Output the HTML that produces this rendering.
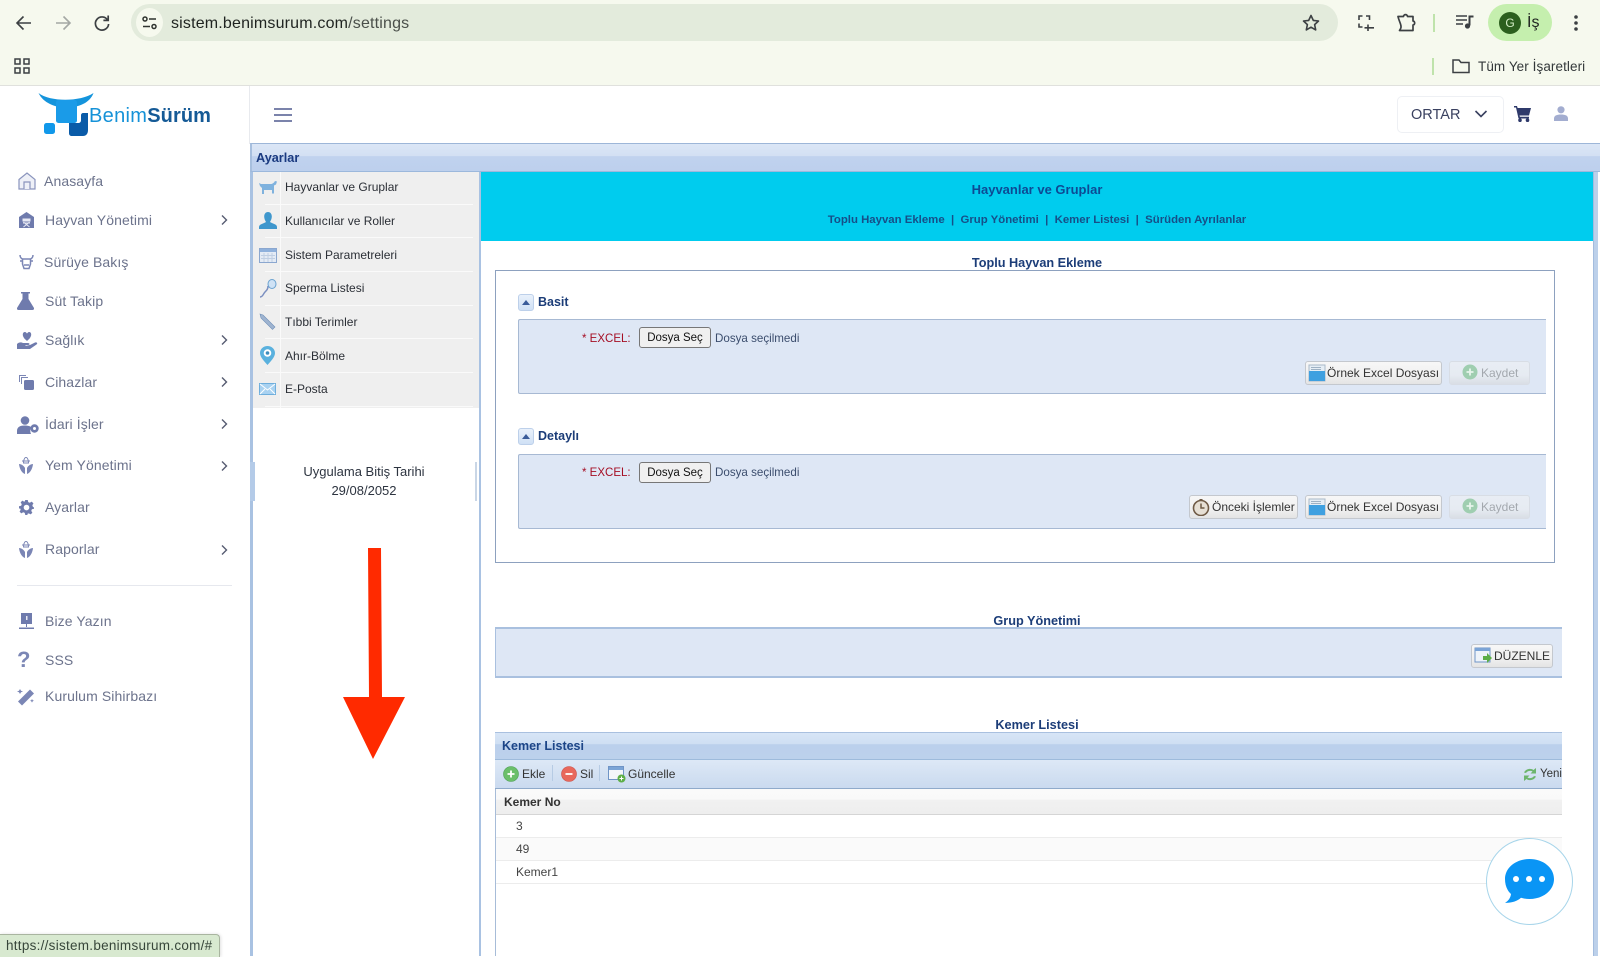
<!DOCTYPE html>
<html lang="tr"><head><meta charset="utf-8"><title>BenimSürüm</title>
<style>
*{box-sizing:border-box}
html,body{margin:0;padding:0;width:1600px;height:956px;overflow:hidden;background:#fff;font-family:"Liberation Sans",sans-serif}
.a{position:absolute}
.t{position:absolute;line-height:20px;height:20px;white-space:nowrap}
.m{font-size:14px;color:#6c738c;letter-spacing:.1px}
.l{font-size:12px;color:#2b2f36;left:285px}
.h{font-size:12.700px;font-weight:bold;color:#1c3d78;text-align:center}
.sep{position:absolute;left:265px;width:208px;height:1px;background:#fafafa}
.btn{position:absolute;height:24px;border:1px solid #c4c8ce;border-radius:3px;background:linear-gradient(#f7f7f7 0,#f0f0f0 60%,#e4e4e4 100%);font-size:12px;color:#333;line-height:22px;white-space:nowrap}
.btn svg{position:absolute;left:2px;top:2px}
.off{color:#a3a8ae;border-color:#d8dde5;background:linear-gradient(#e8edf4 0,#e6ebf2 60%,#d9dee5 100%)}
.file{position:absolute;left:639px;width:72px;height:21px;border:1px solid #777;border-radius:3px;background:#f0f0f0;font-size:11.500px;line-height:20px;text-align:center;color:#111}
svg{display:block}
.tog{position:absolute;left:518px;width:16px;height:17px;border:1px solid #bdd0ea;border-radius:3px;background:linear-gradient(#e9f1fb,#cfe0f5)}
.tog:after{content:"";position:absolute;left:3px;top:5px;border-left:4px solid transparent;border-right:4px solid transparent;border-bottom:5px solid #3a5c9a}
.pan{position:absolute;left:518px;width:1028px;background:#dee7f5;border:1px solid #a7b9d3;border-right:0;border-radius:2px 0 0 2px}
</style></head><body>

<!-- browser chrome -->
<div class="a" style="left:0;top:0;width:1600px;height:86px;background:#f6f9ee;border-bottom:1px solid #e0e1dd"></div>
<svg class="a" style="left:13px;top:12px" width="22" height="22" viewBox="0 0 22 22" fill="none" stroke="#3c4043" stroke-width="1.6"><path d="M18 11H4.500M10.500 4.500 4 11l6.500 6.500"/></svg>
<svg class="a" style="left:52px;top:12px" width="22" height="22" viewBox="0 0 22 22" fill="none" stroke="#a4a8a4" stroke-width="1.6"><path d="M4 11h13.500M11.500 4.500 18 11l-6.500 6.500"/></svg>
<svg class="a" style="left:91px;top:12px" width="22" height="22" viewBox="0 0 22 22" fill="none" stroke="#3c4043" stroke-width="1.7"><path d="M16.600 8A6.600 6.600 0 1 0 17.600 12"/><path d="M17.200 3.500V8.400H12.400"/></svg>
<div class="a" style="left:131px;top:4px;width:1207px;height:37px;background:#e3ebdc;border-radius:19px"></div>
<div class="a" style="left:136px;top:8px;width:27px;height:29px;background:#f6f9ee;border-radius:50%"></div>
<svg class="a" style="left:141px;top:15px" width="17" height="16" viewBox="0 0 17 16" fill="none" stroke="#2f332f" stroke-width="1.5"><circle cx="4" cy="4" r="2"/><path d="M8 4h7M2 11.500h7"/><circle cx="13" cy="11.500" r="2"/></svg>
<div class="t" style="left:171px;top:14px;font-size:16px;color:#1f2320;letter-spacing:.18px">sistem.benimsurum.com<span style="color:#4a4f4a">/settings</span></div>
<svg class="a" style="left:1301px;top:13px" width="20" height="20" viewBox="0 0 20 20" fill="none" stroke="#3c4043" stroke-width="1.6" stroke-linejoin="round"><path d="M10 2.500l2.300 4.900 5.200.6-3.900 3.600 1.100 5.300L10 14.200 5.300 16.900l1.100-5.300L2.500 8l5.200-.6z"/></svg>
<svg class="a" style="left:1356px;top:13px" width="20" height="20" viewBox="0 0 20 20" fill="none" stroke="#3c4043" stroke-width="1.6"><path d="M3 7V3h3.500M10 3h3.500v4M3 10.500V14h3.500M12 18v-6.500M8.500 14.800H18"/></svg>
<svg class="a" style="left:1396px;top:13px" width="20" height="20" viewBox="0 0 20 20" fill="none" stroke="#3c4043" stroke-width="1.7" stroke-linejoin="round"><path d="M2 3.500h5.500c0-2.500 4-2.500 4 0H17v4.500c2.200 0 2.200 4 0 4V17.500H3.500c1.500-2 2-3.500 1-6.500C3.500 8 2.500 6 2 3.500z"/></svg>
<div class="a" style="left:1433px;top:14px;width:2px;height:18px;background:#bfe3ab"></div>
<svg class="a" style="left:1455px;top:14px" width="20" height="18" viewBox="0 0 20 18" fill="none" stroke="#3c4043" stroke-width="1.5"><path d="M1 2h11M1 6h11M1 10h7"/><path d="M14.500 11.500V2.500h4" stroke-width="2"/><circle cx="12.500" cy="12" r="2.600" fill="#3c4043" stroke="none"/></svg>
<div class="a" style="left:1488px;top:4px;width:64px;height:37px;background:#c5efae;border-radius:19px"></div>
<div class="a" style="left:1499px;top:12px;width:22px;height:22px;background:#2c5f1e;border-radius:50%;color:#d4eec6;font-size:12px;text-align:center;line-height:22px">G</div>
<div class="t" style="left:1527px;top:13px;font-size:16px;color:#1f2320">İş</div>
<svg class="a" style="left:1573px;top:14px" width="6" height="18" viewBox="0 0 6 18" fill="#3c4043"><circle cx="3" cy="3" r="1.800"/><circle cx="3" cy="9" r="1.800"/><circle cx="3" cy="15" r="1.800"/></svg>
<svg class="a" style="left:13px;top:57px" width="18" height="18" viewBox="0 0 18 18" fill="none" stroke="#3c4043" stroke-width="1.500"><rect x="2" y="2" width="5" height="5"/><rect x="11" y="2" width="5" height="5"/><rect x="2" y="11" width="5" height="5"/><rect x="11" y="11" width="5" height="5"/></svg>
<div class="a" style="left:1432px;top:58px;width:2px;height:17px;background:#bfe3ab"></div>
<svg class="a" style="left:1451px;top:58px" width="20" height="16" viewBox="0 0 20 16" fill="none" stroke="#3c4043" stroke-width="1.500"><path d="M2 14.500V2h6l2 2.500h8v10z"/></svg>
<div class="t" style="left:1478px;top:57px;font-size:13.500px;color:#33383a;letter-spacing:.08px">Tüm Yer İşaretleri</div>

<!-- sidebar divider -->
<div class="a" style="left:249px;top:86px;width:1px;height:58px;background:#e8eaee"></div>

<!-- logo -->
<svg class="a" style="left:36px;top:90px" width="60" height="50" viewBox="0 0 60 50">
<path d="M2.500 3C14 12 44 12 57.500 3 51 22 12 23 2.500 3z" fill="#1494dc"/>
<rect x="20" y="10" width="21" height="23" rx="2.500" fill="#1a9be8"/>
<rect x="8" y="33" width="11" height="11" rx="2.500" fill="#1198ea"/>
<path d="M33 33h9c2 0 3-1 3-3v-5c0-1 1-2 2-2h5v17c0 4-2 6-5 6H36c-2 0-3-1-3-3z" fill="#0a5ba8"/>
</svg>
<div class="t" style="left:89px;top:105px;font-size:20px;color:#1592d8;letter-spacing:.3px;line-height:22px;height:22px">Benim<span style="color:#155a96;font-weight:bold;letter-spacing:.1px">Sürüm</span></div>

<!-- sidebar menu -->
<svg class="a" style="left:17px;top:171px" width="20" height="20" viewBox="0 0 20 20" fill="#eef0f7" stroke="#8a94bd" stroke-width="1.200"><path d="M2 8.500 10 2l8 6.500V18H2z"/><path d="M7 18v-7h6v7"/></svg>
<div class="t m" style="left:44px;top:171px">Anasayfa</div>
<svg class="a" style="left:19px;top:212px" width="15" height="16" viewBox="0 0 15 16" fill="#6f7bad"><path d="M0 5 7.500 0 15 5v11H0z"/><path d="M4 7h7v2H4zM4 11h7M4.500 10l6 5M10.500 10l-6 5" stroke="#e8eaf4" fill="#e8eaf4" stroke-width="1"/></svg>
<div class="t m" style="left:45px;top:210px">Hayvan Yönetimi</div>
<svg class="a" style="left:19px;top:254px" width="15" height="16" viewBox="0 0 15 16" fill="none" stroke="#7b86b5" stroke-width="1.500"><path d="M1 1c0 3 2 4 3 4h7c1 0 3-1 3-4M3.500 5v5l1.500 4.500h5L11.500 10V5M1 7h2.500M11.500 7H14M5 11h5"/></svg>
<div class="t m" style="left:44px;top:252px">Sürüye Bakış</div>
<svg class="a" style="left:17px;top:292px" width="17" height="18" viewBox="0 0 17 18" fill="#6f7bad"><path d="M4 0h9v1.500h-1.500V7L17 16c.3 1-.3 2-1.500 2h-14C.3 18-.3 17 0 16L5.500 7V1.500H4z"/></svg>
<div class="t m" style="left:45px;top:291px">Süt Takip</div>
<svg class="a" style="left:17px;top:331px" width="21" height="19" viewBox="0 0 21 19" fill="#6f7bad"><path d="M9 9C5 6 5 1.500 7.500 1 9 .8 9.500 2 10 2.500 10.500 2 11 .8 12.500 1 15 1.500 15 6 11 9l-1 1z"/><path d="M0 13c2-2 4-2 6-1h5c2 0 2 2 0 2H8l1 .8 4-.8 5-2.500c2-.5 3 1 1.500 2L13 18H0z"/></svg>
<div class="t m" style="left:45px;top:330px">Sağlık</div>
<svg class="a" style="left:19px;top:375px" width="15" height="15" viewBox="0 0 15 15" fill="none" stroke="#7b86b5" stroke-width="1"><path d="M.5 7V.5H7M2.500 9V2.500H9"/><rect x="5" y="5" width="10" height="10" rx="1.500" fill="#6f7bad" stroke="none"/></svg>
<div class="t m" style="left:45px;top:372px">Cihazlar</div>
<svg class="a" style="left:17px;top:416px" width="23" height="18" viewBox="0 0 23 18" fill="#6f7bad"><circle cx="8" cy="4.500" r="4.300"/><path d="M0 18v-3c0-4 3-5.500 8-5.500 2.500 0 4.500.4 6 1.500-1 2-1 5 0 7z"/><circle cx="17.500" cy="12.500" r="4.200"/><circle cx="17.500" cy="12.500" r="1.500" fill="#fff"/></svg>
<div class="t m" style="left:45px;top:414px">İdari İşler</div>
<svg class="a" style="left:19px;top:457px" width="14" height="18" viewBox="0 0 14 18" fill="#7b86b5"><path d="M7 0c1.500 1 2.500 3 2.500 6H4.500C4.500 3 5.500 1 7 0z" fill="none" stroke="#7b86b5"/><path d="M0 7c2.500 0 5 2 6 4V17C3 16 .5 12 0 7zM14 7c-2.500 0-5 2-6 4V17c3-1 5.500-5 6-10z"/><path d="M3 4h8" stroke="#7b86b5"/></svg>
<div class="t m" style="left:45px;top:455px">Yem Yönetimi</div>
<svg class="a" style="left:19px;top:500px" width="15" height="15" viewBox="0 0 24 24" fill="#6f7bad"><path d="M10 0h4l.8 3.400 2.500 1 3-1.800 2.800 2.800-1.800 3 1 2.500L24 12v2l-3.400.8-1 2.500 1.800 3-2.800 2.800-3-1.800-2.500 1L14 24h-4l-.8-3.400-2.500-1-3 1.800L.9 18.600l1.800-3-1-2.500L0 14v-4l3.400-.8 1-2.500-1.800-3L5.400.9l3 1.800 1-1z"/><circle cx="12" cy="12" r="4.500" fill="#fff"/></svg>
<div class="t m" style="left:45px;top:497px">Ayarlar</div>
<svg class="a" style="left:19px;top:541px" width="14" height="18" viewBox="0 0 14 18" fill="#7b86b5"><path d="M7 0c1.500 1 2.500 3 2.500 6H4.500C4.500 3 5.500 1 7 0z" fill="none" stroke="#7b86b5"/><path d="M0 7c2.500 0 5 2 6 4V17C3 16 .5 12 0 7zM14 7c-2.500 0-5 2-6 4V17c3-1 5.500-5 6-10z"/><path d="M3 4h8" stroke="#7b86b5"/></svg>
<div class="t m" style="left:45px;top:539px">Raporlar</div>
<svg class="a" style="left:219px;top:214px" width="10" height="12" viewBox="0 0 10 12" fill="none" stroke="#555b70" stroke-width="1.400"><path d="M3 1.500 7.500 6 3 10.500"/></svg>
<svg class="a" style="left:219px;top:334px" width="10" height="12" viewBox="0 0 10 12" fill="none" stroke="#555b70" stroke-width="1.400"><path d="M3 1.500 7.500 6 3 10.500"/></svg>
<svg class="a" style="left:219px;top:376px" width="10" height="12" viewBox="0 0 10 12" fill="none" stroke="#555b70" stroke-width="1.400"><path d="M3 1.500 7.500 6 3 10.500"/></svg>
<svg class="a" style="left:219px;top:418px" width="10" height="12" viewBox="0 0 10 12" fill="none" stroke="#555b70" stroke-width="1.400"><path d="M3 1.500 7.500 6 3 10.500"/></svg>
<svg class="a" style="left:219px;top:460px" width="10" height="12" viewBox="0 0 10 12" fill="none" stroke="#555b70" stroke-width="1.400"><path d="M3 1.500 7.500 6 3 10.500"/></svg>
<svg class="a" style="left:219px;top:544px" width="10" height="12" viewBox="0 0 10 12" fill="none" stroke="#555b70" stroke-width="1.400"><path d="M3 1.500 7.500 6 3 10.500"/></svg>
<div class="a" style="left:17px;top:585px;width:215px;height:1px;background:#e6e8ee"></div>
<svg class="a" style="left:19px;top:613px" width="15" height="17" viewBox="0 0 15 17" fill="#6f7bad"><path d="M2 0h11v11H2z"/><path d="M7 11h1v3H7zM0 14.500h15V16H0z"/><path d="M7 3h1.500v4H7z" fill="#e8eaf4"/></svg>
<div class="t m" style="left:45px;top:611px">Bize Yazın</div>
<div class="t" style="left:17px;top:649px;font-size:22px;font-weight:bold;color:#7b86b5;line-height:22px;height:22px">?</div>
<div class="t m" style="left:45px;top:650px">SSS</div>
<svg class="a" style="left:17px;top:688px" width="18" height="18" viewBox="0 0 18 18" fill="#7b86b5"><path d="M13 1.500l4 4L5 17.500l-4-4z"/><path d="M3 1l1 1.800L6 3.500l-2 .8L3 6 2 4.300 0 3.500 2 2.800zM15 11l.7 1.300 1.300.5-1.300.5-.7 1.300-.7-1.300-1.300-.5 1.300-.5z"/></svg>
<div class="t m" style="left:45px;top:686px">Kurulum Sihirbazı</div>

<!-- top header -->
<div class="a" style="left:274px;top:108px;width:18px;height:2px;background:#7b83ab"></div>
<div class="a" style="left:274px;top:114px;width:18px;height:2px;background:#7b83ab"></div>
<div class="a" style="left:274px;top:120px;width:18px;height:2px;background:#7b83ab"></div>
<div class="a" style="left:1397px;top:96px;width:107px;height:37px;border:1px solid #eef0f4;border-radius:5px;background:#fff"></div>
<div class="t" style="left:1411px;top:105px;font-size:14.500px;color:#3a4160">ORTAR</div>
<svg class="a" style="left:1474px;top:109px" width="14" height="10" viewBox="0 0 14 10" fill="none" stroke="#3a4160" stroke-width="1.600"><path d="M1.500 2 7 7.500 12.500 2"/></svg>
<svg class="a" style="left:1514px;top:106px" width="17" height="16" viewBox="0 0 17 16" fill="#2f3a6b"><path d="M0 0h3l.6 2H17l-2 7.500H5.500l.4 1.200H15V12.500H4.500L2 1.500H0z"/><circle cx="6" cy="14.200" r="1.800"/><circle cx="13.500" cy="14.200" r="1.800"/></svg>
<svg class="a" style="left:1554px;top:106px" width="14" height="15" viewBox="0 0 14 15" fill="#a3add0"><circle cx="7" cy="3.800" r="3.600"/><path d="M0 15v-2.500C0 9.500 3 8.500 7 8.500s7 1 7 4V15z"/></svg>

<!-- Ayarlar panel -->
<div class="a" style="left:250px;top:143px;width:1350px;height:29px;border-top:1px solid #9db6d8;border-bottom:1px solid #9cb8dc;border-left:2px solid #a7bfde;background:linear-gradient(#dbe6f6 0,#d3e0f3 44%,#c0d2ee 46%,#bdd0ed 100%)"></div>
<div class="t" style="left:256px;top:148px;font-size:12.700px;font-weight:bold;color:#1a3a80">Ayarlar</div>

<!-- left accordion -->
<div class="a" style="left:250px;top:172px;width:3px;height:784px;background:#a9c2e2"></div>
<div class="a" style="left:250px;top:462px;width:5px;height:39px;background:#b4cbe8"></div>
<div class="a" style="left:253px;top:172px;width:226px;height:236px;background:#efefef"></div>
<div class="a" style="left:280px;top:172px;width:1px;height:236px;background:#fafafa"></div>
<div class="sep" style="top:204px"></div><div class="sep" style="top:237px"></div><div class="sep" style="top:271px"></div><div class="sep" style="top:305px"></div><div class="sep" style="top:338px"></div><div class="sep" style="top:372px"></div><div class="sep" style="top:406px"></div>
<svg class="a" style="left:259px;top:180px" width="18" height="14" viewBox="0 0 18 14" fill="#7fb2de"><path d="M0 3l2 1h10c1 0 3-1 4-3l2 .5-1 3-2 1v8h-2V10H5v4H3V8L1 6z"/></svg>
<svg class="a" style="left:259px;top:212px" width="18" height="17" viewBox="0 0 18 17" fill="#3f97cd"><path d="M9 0c2.500 0 3.800 2 3.800 4.500S11.500 9 11 10c2 1.500 7 2 7 5v2H0v-2c0-3 5-3.500 7-5-.5-1-1.800-3-1.800-5.500S6.500 0 9 0z"/></svg>
<svg class="a" style="left:259px;top:248px" width="18" height="15" viewBox="0 0 18 15"><rect x=".5" y=".5" width="17" height="14" fill="#e4ebf5" stroke="#8ba7cf"/><rect x="1" y="1" width="16" height="3" fill="#8fb1dc"/><path d="M5 5v9M9 5v9M13 5v9M2 7.500h14M2 10.500h14" stroke="#c0cfe3"/></svg>
<svg class="a" style="left:259px;top:279px" width="18" height="19" viewBox="0 0 18 19" fill="none"><path d="M1 18c3 0 3-3 5-5s3-3 3-6" stroke="#7b8fc0" stroke-width="1.500"/><ellipse cx="13" cy="5" rx="4" ry="4.500" fill="#cfe2f5" stroke="#6aa2d0"/></svg>
<svg class="a" style="left:259px;top:313px" width="18" height="18" viewBox="0 0 18 18"><path d="M1 1l3 1 12 12-2.500 2.500L2 5z" fill="#9fb4d0" stroke="#6f8fb8" stroke-width=".6"/></svg>
<svg class="a" style="left:260px;top:346px" width="15" height="19" viewBox="0 0 15 19"><path d="M7.500 0C3.500 0 0 3 0 7c0 4 4 8 7.500 12C11 15 15 11 15 7c0-4-3.500-7-7.500-7z" fill="#5ab1de"/><circle cx="7.500" cy="7" r="3.800" fill="#fff"/><circle cx="7.500" cy="7" r="1.800" fill="#3d8dbd"/></svg>
<svg class="a" style="left:259px;top:383px" width="17" height="12" viewBox="0 0 17 12"><rect x=".5" y=".5" width="16" height="11" fill="#a9d2f1" stroke="#6eaedc"/><path d="M1 1l7.500 6L16 1M1 11l5-5M16 11l-5-5" fill="none" stroke="#fff"/></svg>
<div class="t l" style="top:177px">Hayvanlar ve Gruplar</div>
<div class="t l" style="top:211px">Kullanıcılar ve Roller</div>
<div class="t l" style="top:245px">Sistem Parametreleri</div>
<div class="t l" style="top:278px">Sperma Listesi</div>
<div class="t l" style="top:312px">Tıbbi Terimler</div>
<div class="t l" style="top:346px">Ahır-Bölme</div>
<div class="t l" style="top:379px">E-Posta</div>
<div class="t" style="left:254px;top:462px;width:220px;text-align:center;font-size:13px;color:#2d3440">Uygulama Bitiş Tarihi</div>
<div class="t" style="left:254px;top:481px;width:220px;text-align:center;font-size:13px;color:#2d3440">29/08/2052</div>
<div class="a" style="left:475px;top:462px;width:2px;height:39px;background:#c9d6e6"></div>
<svg class="a" style="left:340px;top:545px" width="70" height="218" viewBox="0 0 70 218"><path d="M28 3h13l1 149h23L33 214 3 152h26z" fill="#ff2a00"/></svg>

<!-- right content -->
<div class="a" style="left:479px;top:172px;width:2px;height:784px;background:#a9c2e2"></div>
<div class="a" style="left:1593px;top:172px;width:5px;height:784px;background:#bcd0ea;border-left:1px solid #a3bcde"></div>
<div class="a" style="left:481px;top:172px;width:1112px;height:69px;background:#00ccee"></div>
<div class="t" style="left:481px;top:180px;width:1112px;text-align:center;font-size:13px;font-weight:bold;color:#0d4a94">Hayvanlar ve Gruplar</div>
<div class="t" style="left:481px;top:210px;width:1112px;text-align:center;font-size:11.400px;font-weight:bold;color:#164f88;white-space:pre">Toplu Hayvan Ekleme  |  Grup Yönetimi  |  Kemer Listesi  |  Sürüden Ayrılanlar</div>

<div class="t h" style="left:481px;top:253px;width:1112px">Toplu Hayvan Ekleme</div>
<div class="a" style="left:495px;top:270px;width:1060px;height:293px;border:1px solid #8da1bf"></div>

<div class="tog" style="top:294px"></div>
<div class="t" style="left:538px;top:292px;font-size:12.500px;font-weight:bold;color:#1c3d78">Basit</div>
<div class="pan" style="top:319px;height:75px"></div>
<div class="t" style="left:582px;top:329px;font-size:11.500px;color:#a50f25">* EXCEL:</div>
<div class="file" style="top:327px">Dosya Seç</div>
<div class="t" style="left:715px;top:329px;font-size:11.600px;color:#3b4d6d">Dosya seçilmedi</div>
<div class="btn" style="left:1305px;top:361px;width:137px;padding-left:21px"><svg width="18" height="18" viewBox="0 0 18 18"><rect x="1" y="1" width="16" height="16" fill="#e6eef5" stroke="#a9b9c9"/><path d="M1 7h16v10H1z" fill="#3fa0e0"/><path d="M3 3.500h10M3 5.500h10" stroke="#9fb2c4"/></svg>Örnek Excel Dosyası</div>
<div class="btn off" style="left:1449px;top:361px;width:81px;padding-left:31px"><svg style="left:12px" width="16" height="16" viewBox="0 0 16 16"><circle cx="8" cy="8" r="7.500" fill="#9fceb0"/><path d="M8 4.500v7M4.500 8h7" stroke="#e8f5ec" stroke-width="1.800"/></svg>Kaydet</div>

<div class="tog" style="top:428px"></div>
<div class="t" style="left:538px;top:426px;font-size:12.500px;font-weight:bold;color:#1c3d78">Detaylı</div>
<div class="pan" style="top:454px;height:75px"></div>
<div class="t" style="left:582px;top:463px;font-size:11.500px;color:#a50f25">* EXCEL:</div>
<div class="file" style="top:462px">Dosya Seç</div>
<div class="t" style="left:715px;top:463px;font-size:11.600px;color:#3b4d6d">Dosya seçilmedi</div>
<div class="btn" style="left:1189px;top:495px;width:109px;padding-left:22px"><svg width="18" height="18" viewBox="0 0 18 18"><circle cx="9" cy="10" r="7.500" fill="#e6dfd4" stroke="#6f5a45" stroke-width="1.600"/><path d="M9 5.500V10h3.500" stroke="#6f5a45" stroke-width="1.500" fill="none"/><rect x="7.500" y="1" width="3" height="2" fill="#6f5a45"/></svg>Önceki İşlemler</div>
<div class="btn" style="left:1305px;top:495px;width:137px;padding-left:21px"><svg width="18" height="18" viewBox="0 0 18 18"><rect x="1" y="1" width="16" height="16" fill="#e6eef5" stroke="#a9b9c9"/><path d="M1 7h16v10H1z" fill="#3fa0e0"/><path d="M3 3.500h10M3 5.500h10" stroke="#9fb2c4"/></svg>Örnek Excel Dosyası</div>
<div class="btn off" style="left:1449px;top:495px;width:81px;padding-left:31px"><svg style="left:12px" width="16" height="16" viewBox="0 0 16 16"><circle cx="8" cy="8" r="7.500" fill="#9fceb0"/><path d="M8 4.500v7M4.500 8h7" stroke="#e8f5ec" stroke-width="1.800"/></svg>Kaydet</div>

<div class="t h" style="left:481px;top:611px;width:1112px">Grup Yönetimi</div>
<div class="a" style="left:495px;top:627px;width:1067px;height:51px;background:#dee7f5;border:1px solid #a9c0df;border-width:2px 0 2px 1px"></div>
<div class="btn" style="left:1471px;top:644px;width:82px;padding-left:22px"><svg width="19" height="18" viewBox="0 0 19 18"><rect x="1" y="1" width="15" height="14" fill="#eef3f9" stroke="#6f94c6"/><rect x="1" y="1" width="15" height="3" fill="#7ba4d6"/><path d="M9 9h4V6l5 5-5 5v-3H9z" fill="#5cae47"/></svg>DÜZENLE</div>

<div class="t h" style="left:481px;top:715px;width:1112px">Kemer Listesi</div>
<div class="a" style="left:495px;top:732px;width:1px;height:224px;background:#a7bcd8"></div>
<div class="a" style="left:495px;top:732px;width:1067px;height:28px;background:linear-gradient(#d7e5f6 0,#cfdff3 42%,#bbd0ec 44%,#bcd1ec 100%);border-top:1px solid #a9c0df;border-bottom:1px solid #9ebbdc"></div>
<div class="t" style="left:502px;top:736px;font-size:12.500px;font-weight:bold;color:#1c4587">Kemer Listesi</div>
<div class="a" style="left:495px;top:760px;width:1067px;height:29px;background:linear-gradient(#dde8f6,#cadaef);border-bottom:1px solid #8faacb"></div>
<svg class="a" style="left:503px;top:766px" width="16" height="16" viewBox="0 0 16 16"><circle cx="8" cy="8" r="7.500" fill="#6bbf6a" stroke="#4f9f55" stroke-width=".6"/><path d="M8 4.500v7M4.500 8h7" stroke="#fff" stroke-width="1.800"/></svg>
<div class="t" style="left:522px;top:764px;font-size:12px;color:#333">Ekle</div>
<div class="a" style="left:552px;top:765px;width:1px;height:16px;background:#b6cbe4"></div>
<svg class="a" style="left:561px;top:766px" width="16" height="16" viewBox="0 0 16 16"><circle cx="8" cy="8" r="7.500" fill="#e8685c" stroke="#c9524b" stroke-width=".6"/><path d="M4.500 8h7" stroke="#fff" stroke-width="1.800"/></svg>
<div class="t" style="left:580px;top:764px;font-size:12px;color:#333">Sil</div>
<div class="a" style="left:599px;top:765px;width:1px;height:16px;background:#b6cbe4"></div>
<svg class="a" style="left:608px;top:766px" width="18" height="17" viewBox="0 0 18 17"><rect x=".5" y=".5" width="15" height="13" fill="#f3f6fa" stroke="#6f94c6"/><rect x="1" y="1" width="14" height="3" fill="#7ba4d6"/><circle cx="13.500" cy="12.500" r="4" fill="#5cae47"/><path d="M13.500 10.500v4M11.500 12.500h4" stroke="#fff"/></svg>
<div class="t" style="left:628px;top:764px;font-size:12px;color:#333">Güncelle</div>
<svg class="a" style="left:1523px;top:767px" width="14" height="15" viewBox="0 0 14 15" fill="#6db56d"><path d="M1 5.500C3 1.500 8 1 10.500 3L13 1v5.500H7.500L9.500 4.500C8 3.500 4.500 3.500 3 6z"/><path d="M13 9.500C11 13.500 6 14 3.500 12L1 14V8.500h5.500L4.500 10.500C6 11.500 9.500 11.500 11 9z"/></svg>
<div class="a" style="left:1540px;top:764px;width:22px;height:20px;overflow:hidden;font-size:11.500px;line-height:20px;color:#333">Yeni</div>
<div class="a" style="left:496px;top:789px;width:1066px;height:26px;background:linear-gradient(#fafafa 0,#f9f9f9 40%,#f1f1f1 45%,#eeeeee 100%);border-bottom:1px solid #d5d5d5"></div>
<div class="t" style="left:504px;top:792px;font-size:12px;font-weight:bold;color:#333">Kemer No</div>
<div class="a" style="left:496px;top:837px;width:1066px;height:24px;background:#fafafa;border-top:1px solid #ececec;border-bottom:1px solid #ececec"></div>
<div class="a" style="left:496px;top:883px;width:1066px;height:1px;background:#ececec"></div>
<div class="t" style="left:516px;top:816px;font-size:12px;color:#444">3</div>
<div class="t" style="left:516px;top:839px;font-size:12px;color:#444">49</div>
<div class="t" style="left:516px;top:862px;font-size:12px;color:#444">Kemer1</div>

<!-- chat -->
<div class="a" style="left:1486px;top:838px;width:87px;height:87px;border-radius:50%;background:#fff;border:1px solid #a7d5ea"></div>
<svg class="a" style="left:1504px;top:858px" width="51" height="46" viewBox="0 0 51 46"><path d="M25.500 1C39 1 50 9.500 50 21S39 41 25.500 41c-3 0-6-.4-8.500-1.200C13 43.500 7 45 1 44.800c3.500-2 5.500-5 6-8.800C3 32.500 1 27 1 21 1 9.500 12 1 25.500 1z" fill="#0a95f5"/><circle cx="12" cy="21" r="3" fill="#fff"/><circle cx="25" cy="21" r="3" fill="#fff"/><circle cx="38" cy="21" r="3" fill="#fff"/></svg>

<!-- status bubble -->
<div class="a" style="left:0;top:934px;width:220px;height:23px;background:#d8e9d0;border:1px solid #a9b5a0;border-left:0;border-bottom:0;border-radius:0 4px 0 0;box-shadow:1px 0 3px rgba(0,0,0,.12)"></div>
<div class="t" style="left:6px;top:936px;font-size:13.500px;color:#37463a;letter-spacing:.27px">https://sistem.benimsurum.com/#</div>
</body></html>
